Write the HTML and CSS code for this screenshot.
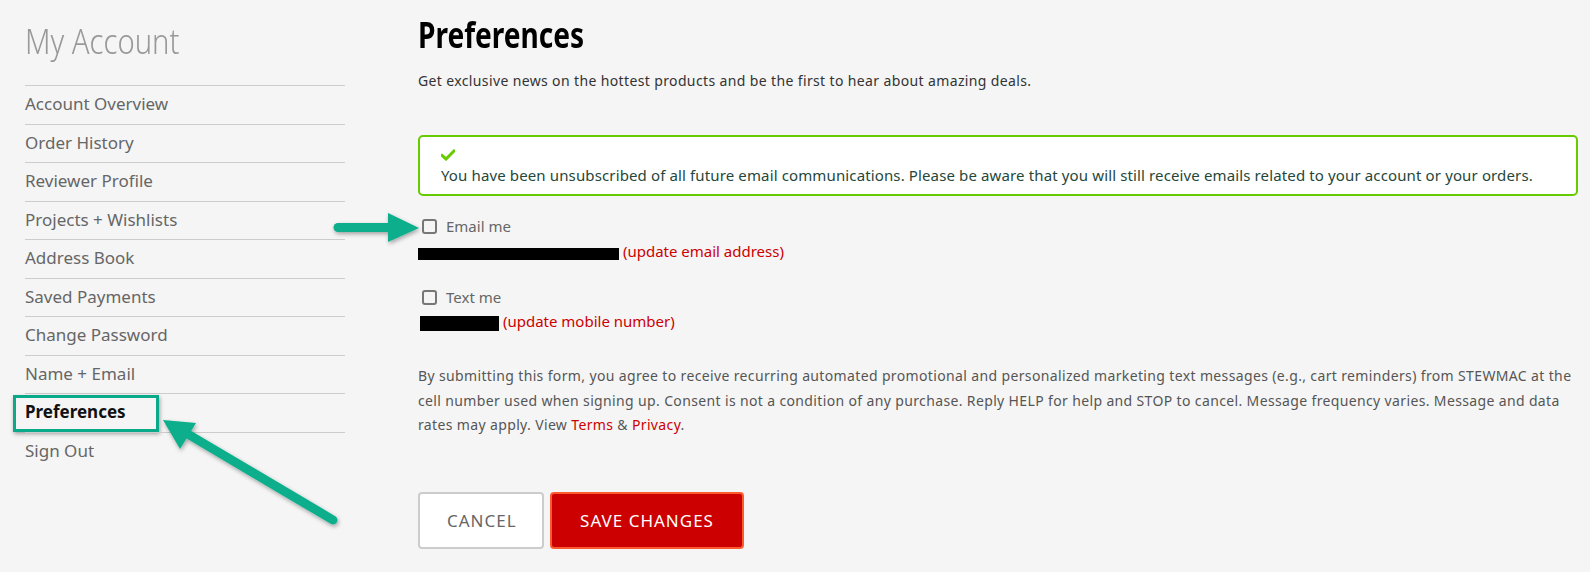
FILE: index.html
```html
<!DOCTYPE html>
<html lang="en">
<head>
<meta charset="utf-8">
<title>My Account - Preferences</title>
<link rel="stylesheet" href="styles.css">
</head>
<body>
<div class="page">
  <aside class="sidebar">
    <h2 class="sidebar-title"><span class="narrow narrow-light">My Account</span></h2>
    <ul class="nav">
      <li class="nav-item">Account Overview</li>
      <li class="nav-item">Order History</li>
      <li class="nav-item">Reviewer Profile</li>
      <li class="nav-item">Projects + Wishlists</li>
      <li class="nav-item">Address Book</li>
      <li class="nav-item">Saved Payments</li>
      <li class="nav-item">Change Password</li>
      <li class="nav-item">Name + Email</li>
      <li class="nav-item active">Preferences</li>
      <li class="nav-item">Sign Out</li>
    </ul>
  </aside>

  <main class="content">
    <h1 class="title"><span class="narrow narrow-bold">Preferences</span></h1>
    <p class="lead">Get exclusive news on the hottest products and be the first to hear about amazing deals.</p>

    <div class="alert">
      <svg class="alert-check" width="14" height="12" viewBox="0 0 14 12" aria-hidden="true">
        <path d="M1 6.5 L5 10 L13 2" fill="none" stroke="#66cc00" stroke-width="3" stroke-linecap="square"/>
      </svg>
      <p class="alert-text">You have been unsubscribed of all future email communications. Please be aware that you will still receive emails related to your account or your orders.</p>
    </div>

    <div class="option">
      <label class="check"><input type="checkbox" class="box"><span>Email me</span></label>
      <div class="detail"><span class="redact redact-email"></span> <a class="red-link">(update email address)</a></div>
    </div>

    <div class="option option-text">
      <label class="check"><input type="checkbox" class="box"><span>Text me</span></label>
      <div class="detail detail-phone"><span class="redact redact-phone"></span> <a class="red-link">(update mobile number)</a></div>
    </div>

    <p class="legal">By submitting this form, you agree to receive recurring automated promotional and personalized marketing text messages (e.g., cart reminders) from STEWMAC at the cell number used when signing up. Consent is not a condition of any purchase. Reply HELP for help and STOP to cancel. Message frequency varies. Message and data rates may apply. View <a class="red-link">Terms</a> &amp; <a class="red-link">Privacy</a>.</p>

    <div class="actions">
      <button class="btn btn-cancel">CANCEL</button>
      <button class="btn btn-save">SAVE CHANGES</button>
    </div>
  </main>

  <svg class="annotations" width="1590" height="572" viewBox="0 0 1590 572" aria-hidden="true">
    <defs>
      <filter id="shadow" x="-20%" y="-20%" width="140%" height="140%">
        <feDropShadow dx="1" dy="2" stdDeviation="2" flood-color="#000" flood-opacity="0.35"/>
      </filter>
    </defs>
    <g filter="url(#shadow)" fill="#0aae8b" stroke="#0aae8b">
      <line x1="338" y1="227.5" x2="392" y2="227.5" stroke-width="9" stroke-linecap="round"/>
      <polygon points="388,213 419,228 388,242" stroke="none"/>
      <line x1="333" y1="520" x2="186" y2="433" stroke-width="9" stroke-linecap="round"/>
      <polygon points="163,420 196,423 180,449" stroke="none"/>
    </g>
  </svg>
</div>
</body>
</html>
```

FILE: styles.css
```css
* { box-sizing: border-box; }

body {
  margin: 0;
  background: #f5f5f5;
  font-family: "Noto Sans", "Open Sans", sans-serif;
  color: #555;
}

.page {
  position: relative;
  display: flex;
  height: 572px;
  overflow: hidden;
}

/* condensed display type */
.narrow {
  display: inline-block;
  transform-origin: left center;
  white-space: nowrap;
}

.narrow-light {
  transform: scaleX(0.86);
}

.narrow-bold {
  transform: scaleX(0.78);
}

/* Sidebar */
.sidebar {
  flex: none;
  width: 320px;
  margin-left: 25px;
}

.sidebar-title {
  margin: 21px 0 24px;
  font-size: 34px;
  line-height: 40px;
  font-weight: 300;
  color: #999;
}

.nav {
  list-style: none;
  margin: 0;
  padding: 0;
}

.nav-item {
  position: relative;
  border-top: 1px solid #cccccc;
  height: 38.5px;
  padding-bottom: 2px;
  line-height: 35.5px;
  font-size: 17px;
  color: #666;
}

.nav-item.active {
  color: #111;
  font-weight: 700;
}

.nav-item.active::after {
  content: "";
  position: absolute;
  left: -12px;
  top: 1px;
  width: 140px;
  height: 31px;
  border: 3px solid #0aa98a;
  box-shadow: 1px 2px 4px rgba(0, 0, 0, 0.35);
}

/* Main content */
.content {
  flex: none;
  width: 1160px;
  margin-left: 73px;
  padding-top: 15px;
}

.title {
  margin: 0;
  font-size: 36px;
  line-height: 40px;
  font-weight: 700;
  color: #000;
}

.lead {
  margin: 15.6px 0 0;
  font-size: 14px;
  line-height: 20px;
  letter-spacing: 0.37px;
  color: #333;
}

.alert {
  margin-top: 44.4px;
  height: 61px;
  padding: 12px 21px 0;
  background: #fff;
  border: 2px solid #66cc00;
  border-radius: 5px;
}

.alert-check {
  display: block;
}

.alert-text {
  margin: 2px 0 0;
  font-size: 15px;
  line-height: 24px;
  letter-spacing: 0.13px;
  color: #24473a;
}

.option {
  margin-top: 20.5px;
}

.option-text {
  margin-top: 25px;
}

.check {
  display: flex;
  align-items: center;
  height: 20px;
  font-size: 15px;
  color: #666;
}

.box {
  appearance: none;
  -webkit-appearance: none;
  width: 15px;
  height: 15px;
  margin: 0 9px 0 4px;
  border: 2px solid #777;
  border-radius: 3px;
  background: #f5f5f5;
}

.detail {
  margin-top: 4px;
  font-size: 15px;
  line-height: 22px;
}

.detail-phone {
  margin-top: 3px;
}

.redact {
  display: inline-block;
  background: #000;
}

.redact-email {
  width: 201px;
  height: 12px;
  vertical-align: -3px;
}

.redact-phone {
  width: 79px;
  height: 15px;
  margin-left: 2px;
  vertical-align: -4px;
}

.red-link {
  color: #cc0000;
}

.legal {
  margin: 31.7px 0 0;
  font-size: 14px;
  line-height: 24.5px;
  letter-spacing: 0.36px;
  color: #555;
}

.actions {
  display: flex;
  gap: 6px;
  margin-top: 54px;
}

.btn {
  height: 57px;
  padding: 0 27px;
  border-radius: 4px;
  font-family: "Noto Sans", "Open Sans", sans-serif;
  font-size: 17px;
  letter-spacing: 1px;
}

.btn-cancel {
  width: 126px;
  background: #fff;
  border: 2px solid #cccccc;
  color: #666;
}

.btn-save {
  width: 194px;
  background: #cc0000;
  border: 2px solid #ff5a2e;
  color: #fff;
}

/* Annotations drawn over the page */
.annotations {
  position: absolute;
  left: 0;
  top: 0;
  pointer-events: none;
}
```
